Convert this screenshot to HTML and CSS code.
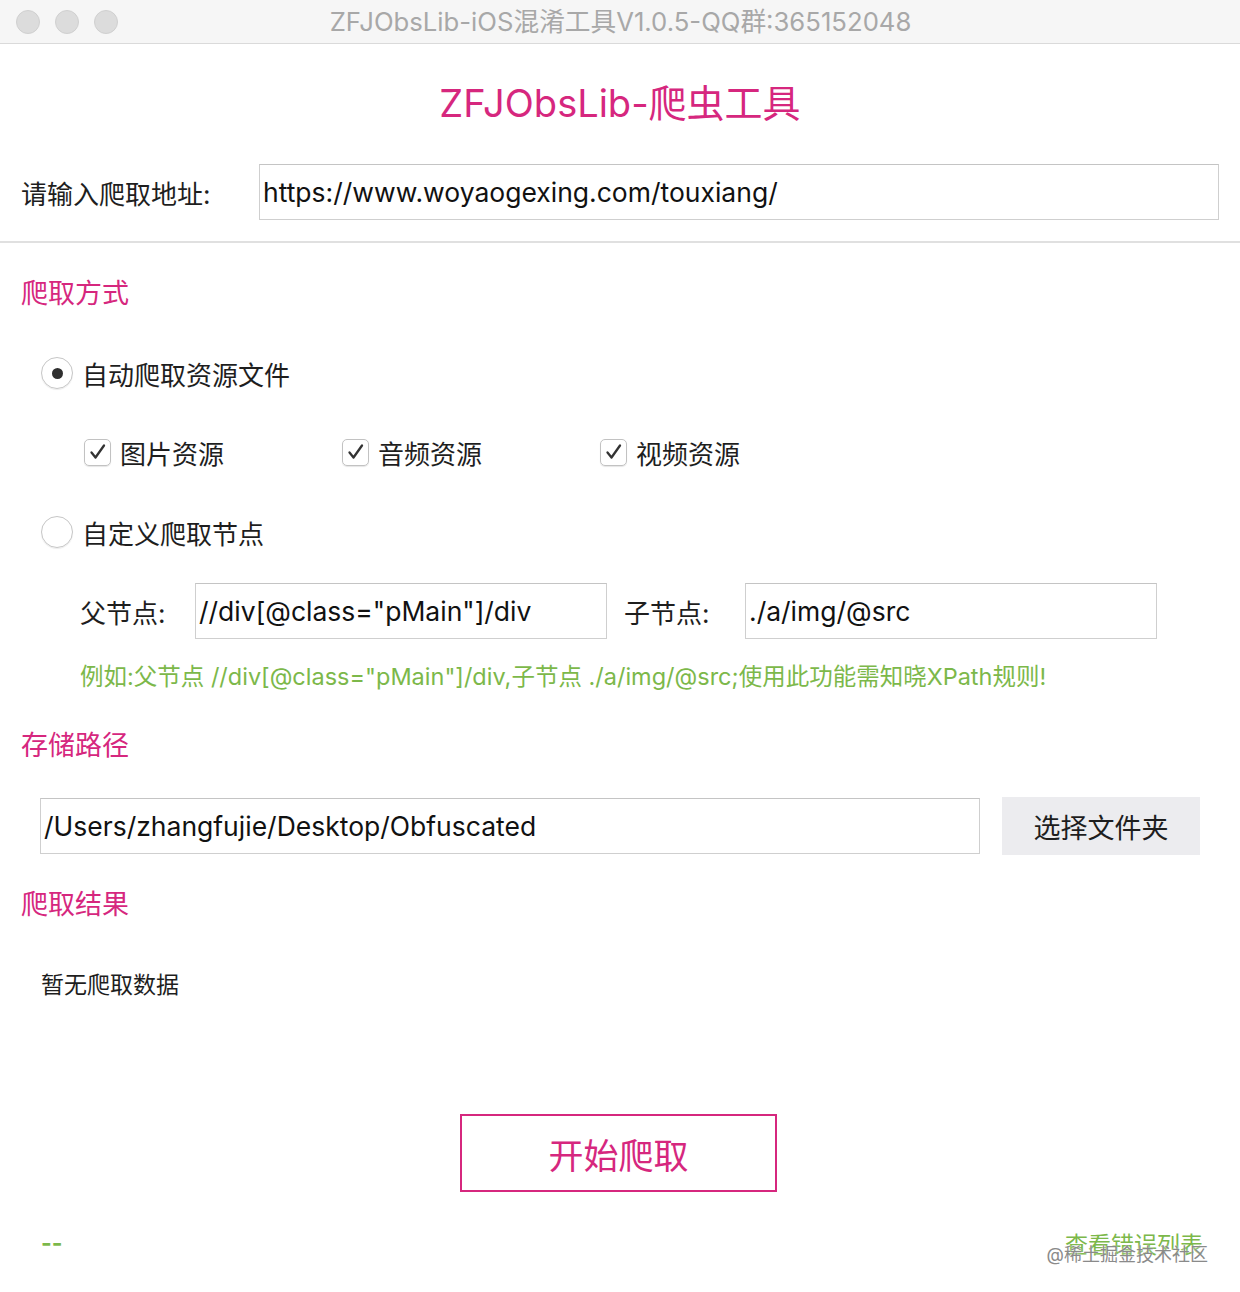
FILE: index.html
```html
<!DOCTYPE html>
<html lang="zh-CN">
<head>
    <meta charset="UTF-8">
    <meta name="viewport" content="width=device-width, initial-scale=1.0">
    <title>ZFJObsLib-爬虫工具</title>
    <link rel="stylesheet" href="styles.css">
</head>
<body>
    <div class="window">
        <div class="titlebar">
            <div class="lights">
                <span class="light"></span>
                <span class="light"></span>
                <span class="light"></span>
            </div>
            <div class="win-title">ZFJObsLib-iOS混淆工具V1.0.5-QQ群:365152048</div>
        </div>

        <div class="head">
            <h1 class="app-title">ZFJObsLib-爬虫工具</h1>
            <div class="url-row">
                <label class="url-label" for="url">请输入爬取地址:</label>
                <div class="field url-field">https://www.woyaogexing.com/touxiang/</div>
            </div>
        </div>

        <div class="main">
            <h2 class="sec-title first">爬取方式</h2>

            <div class="radio-row r1">
                <span class="radio on"></span>
                <span>自动爬取资源文件</span>
            </div>

            <div class="check-row">
                <div class="check-item">
                    <span class="check"><svg viewBox="0 0 26 26" width="26" height="26"><path d="M6.5 13.5 L10.5 18.5 L19 6.5" fill="none" stroke="#333" stroke-width="2.3" stroke-linecap="round" stroke-linejoin="round"/></svg></span>
                    <span>图片资源</span>
                </div>
                <div class="check-item">
                    <span class="check"><svg viewBox="0 0 26 26" width="26" height="26"><path d="M6.5 13.5 L10.5 18.5 L19 6.5" fill="none" stroke="#333" stroke-width="2.3" stroke-linecap="round" stroke-linejoin="round"/></svg></span>
                    <span>音频资源</span>
                </div>
                <div class="check-item">
                    <span class="check"><svg viewBox="0 0 26 26" width="26" height="26"><path d="M6.5 13.5 L10.5 18.5 L19 6.5" fill="none" stroke="#333" stroke-width="2.3" stroke-linecap="round" stroke-linejoin="round"/></svg></span>
                    <span>视频资源</span>
                </div>
            </div>

            <div class="radio-row r2">
                <span class="radio"></span>
                <span>自定义爬取节点</span>
            </div>

            <div class="node-row">
                <span class="node-label">父节点:</span>
                <div class="field node-field">//div[@class="pMain"]/div</div>
                <span class="node-label second">子节点:</span>
                <div class="field node-field">./a/img/@src</div>
            </div>

            <p class="hint">例如:父节点 //div[@class="pMain"]/div,子节点 ./a/img/@src;使用此功能需知晓XPath规则!</p>

            <h2 class="sec-title second-title">存储路径</h2>

            <div class="path-row">
                <div class="field path-field">/Users/zhangfujie/Desktop/Obfuscated</div>
                <button class="pick-btn">选择文件夹</button>
            </div>

            <h2 class="sec-title third-title">爬取结果</h2>

            <p class="empty">暂无爬取数据</p>

            <div class="start-wrap">
                <button class="start-btn">开始爬取</button>
            </div>

            <div class="footer">
                <span class="status">--</span>
                <span class="errors">查看错误列表</span>
                <span class="watermark">@稀土掘金技术社区</span>
            </div>
        </div>
    </div>
</body>
</html>
```

FILE: styles.css
```css
body {
    margin: 0;
    padding: 0;
    background-color: #ffffff;
    font-family: Inter, "Noto Sans CJK SC", sans-serif;
    color: #1e1e1e;
}

.window {
    width: 1240px;
    height: 1292px;
    overflow: hidden;
}

/* 标题栏 */
.titlebar {
    height: 43px;
    background-color: #f6f6f6;
    border-bottom: 1px solid #dadada;
    display: flex;
    align-items: center;
    position: relative;
}

.lights {
    display: flex;
    gap: 15px;
    padding-left: 16px;
}

.light {
    width: 24px;
    height: 24px;
    border-radius: 50%;
    background-color: #dcdcdc;
    border: 1px solid #d0d0d0;
    box-sizing: border-box;
}

.win-title {
    flex: 1;
    text-align: center;
    margin-left: -117px;
    font-size: 25.7px;
    color: #a8a8a8;
    line-height: 43px;
}

/* 头部 */
.head {
    border-bottom: 2px solid #e0e0e0;
    padding-bottom: 21px;
}

.app-title {
    margin: 37px 0 0 0;
    height: 44px;
    line-height: 44px;
    text-align: center;
    font-size: 38px;
    font-weight: normal;
    color: #d6277e;
}

.url-row {
    display: flex;
    align-items: center;
    margin-top: 39px;
    padding-left: 21px;
}

.url-label {
    width: 238px;
    font-size: 26px;
}

.field {
    height: 56px;
    box-sizing: border-box;
    border: 1px solid #cfcfcf;
    border-top-color: #c4c4c4;
    background-color: #ffffff;
    display: flex;
    align-items: center;
    padding-left: 3px;
    font-size: 26.5px;
    color: #111;
    white-space: nowrap;
}

.url-field {
    width: 960px;
}

/* 主体 */
.main {
    padding-left: 21px;
}

.sec-title {
    margin: 0;
    height: 36px;
    line-height: 36px;
    font-size: 27px;
    font-weight: normal;
    color: #d6277e;
}

.sec-title.first {
    margin-top: 33px;
}

.radio-row {
    display: flex;
    align-items: center;
    height: 40px;
    padding-left: 20px;
    font-size: 26px;
}

.radio-row.r1 {
    margin-top: 41px;
}

.radio-row.r2 {
    margin-top: 40px;
}

.radio {
    width: 32px;
    height: 32px;
    box-sizing: border-box;
    border-radius: 50%;
    border: 1px solid #c6c6c6;
    box-shadow: 0 1px 1px rgba(0, 0, 0, 0.08);
    margin-right: 9px;
    display: flex;
    align-items: center;
    justify-content: center;
}

.radio.on::after {
    content: "";
    width: 11px;
    height: 11px;
    border-radius: 50%;
    background-color: #2f2f2f;
}

.check-row {
    display: flex;
    height: 40px;
    margin-top: 39px;
    padding-left: 63px;
}

.check-item {
    width: 258px;
    display: flex;
    align-items: center;
    font-size: 26px;
}

.check {
    width: 27px;
    height: 27px;
    box-sizing: border-box;
    border: 1px solid #c2c2c2;
    border-radius: 5px;
    box-shadow: 0 1px 1px rgba(0, 0, 0, 0.1);
    margin-right: 9px;
    display: flex;
    align-items: center;
    justify-content: center;
}

.check svg {
    flex-shrink: 0;
}

.node-row {
    display: flex;
    align-items: center;
    margin-top: 31px;
    padding-left: 59px;
}

.node-label {
    width: 115px;
    font-size: 26px;
}

.node-label.second {
    width: 121px;
    margin-left: 17px;
}

.node-field {
    width: 412px;
}

.hint {
    margin: 22px 0 0 59px;
    height: 32px;
    line-height: 32px;
    font-size: 23.5px;
    color: #7cb84a;
    white-space: nowrap;
}

.sec-title.second-title {
    margin-top: 35px;
}

.path-row {
    display: flex;
    align-items: center;
    height: 58px;
    margin-top: 33px;
    padding-left: 19px;
}

.path-field {
    width: 940px;
}

.pick-btn {
    width: 198px;
    height: 58px;
    margin-left: 22px;
    border: none;
    background-color: #ececef;
    font-family: inherit;
    font-size: 27px;
    color: #1e1e1e;
    padding: 0;
}

.sec-title.third-title {
    margin-top: 32px;
}

.empty {
    margin: 46px 0 0 20px;
    height: 32px;
    line-height: 32px;
    font-size: 23px;
}

.start-wrap {
    display: flex;
    justify-content: center;
    margin-top: 113px;
    margin-left: -21px;
}

.start-btn {
    width: 317px;
    height: 78px;
    margin-left: -3px;
    border: 2px solid #d6277e;
    background-color: #ffffff;
    color: #d6277e;
    font-family: inherit;
    font-size: 35px;
    padding: 0;
}

.footer {
    position: relative;
    display: flex;
    justify-content: space-between;
    align-items: center;
    height: 30px;
    margin-top: 36px;
    padding-left: 20px;
    padding-right: 37px;
    font-size: 23px;
    color: #7cb84a;
}

.status {
    font-weight: bold;
}

.watermark {
    position: absolute;
    right: 32px;
    top: 12px;
    font-size: 18px;
    color: #8a8a8a;
    text-shadow: 0 0 2px #ffffff;
}
```
